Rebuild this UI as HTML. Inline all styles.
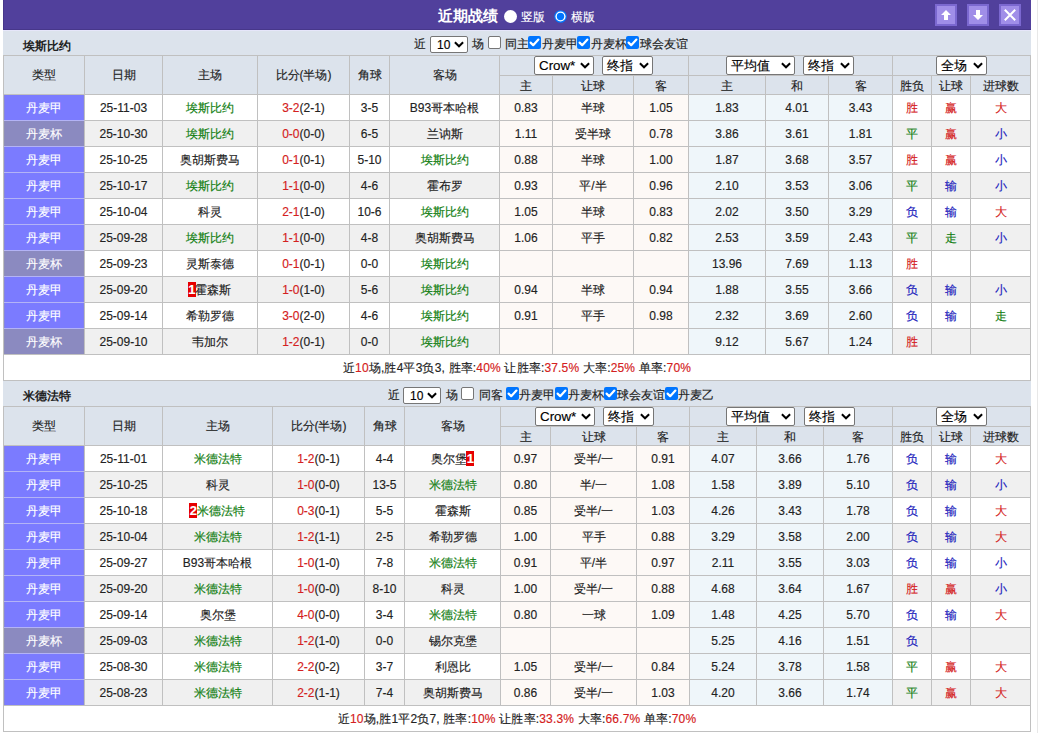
<!DOCTYPE html><html><head><meta charset="utf-8"><style>
html,body{margin:0;padding:0;background:#fff;width:1038px;height:733px;overflow:hidden}
body{position:relative;font-family:"Liberation Sans",sans-serif;font-size:12px;color:#222;-webkit-text-stroke:0.15px currentColor}
body>div{position:absolute}
.t{text-align:center;white-space:nowrap}
.tl{text-align:left;white-space:nowrap}
.c{text-align:center}
.b{font-weight:bold;-webkit-text-stroke:0}
.bd{display:inline-block;background:#e60000;color:#fff;font-weight:bold;width:8px;height:15px;line-height:15px;text-align:center;font-size:13px;vertical-align:middle;margin-top:-2px;margin-left:-1px;margin-right:-0.5px;letter-spacing:0}
.cb{width:11px;height:11px;border:1px solid #767676;border-radius:2px;background:#fff}
.cb.on{width:13px;height:13px;border:none;background:#0075ff}
.cb svg{display:block}
.sel{position:absolute;border:1px solid #767676;border-radius:2px;background:#fff;font-size:13.33px;color:#000}

</style></head><body>
<div style="left:3px;top:0;width:1028px;height:30px;background:#51409c;box-shadow:inset 1px -1px 0 #47378a"></div>
<div style="left:3px;top:30px;width:1028px;height:1px;background:#e6e6fa"></div>
<div style="left:1037px;top:0;width:1px;height:733px;background:#e8e8e8"></div>
<div class="tl" style="left:438px;top:5px;color:#fff;font-weight:bold;font-size:15px;line-height:22px;-webkit-text-stroke:0">近期战绩</div>
<div style="left:504px;top:10px;width:13px;height:13px;border-radius:50%;background:#fff"></div>
<div class="tl" style="left:521px;top:6px;color:#fff;line-height:22px">竖版</div>
<div style="left:554px;top:10px"><svg width="13" height="13" viewBox="0 0 13 13"><circle cx="6.5" cy="6.5" r="6.3" fill="#0075ff"/><circle cx="6.5" cy="6.5" r="5.1" fill="#fff"/><circle cx="6.5" cy="6.5" r="3.7" fill="#0075ff"/></svg></div>
<div class="tl" style="left:571px;top:6px;color:#fff;line-height:22px">横版</div>
<div style="left:935px;top:4px;width:18px;height:18px;border:2px solid #7b68d0;background:#a08ee8"></div>
<div style="left:967px;top:4px;width:18px;height:18px;border:2px solid #7b68d0;background:#a08ee8"></div>
<div style="left:999px;top:4px;width:18px;height:18px;border:2px solid #7b68d0;background:#a08ee8"></div>
<div style="left:935px;top:4px"><svg width="22" height="22" viewBox="0 0 22 22"><path d="M11 6 L16 11 L13 11 L13 16 L9 16 L9 11 L6 11 Z" fill="#fff"/></svg></div>
<div style="left:967px;top:4px"><svg width="22" height="22" viewBox="0 0 22 22"><path d="M11 16 L16 11 L13 11 L13 6 L9 6 L9 11 L6 11 Z" fill="#fff"/></svg></div>
<div style="left:999px;top:4px"><svg width="22" height="22" viewBox="0 0 22 22"><path d="M5.8 5.8 L16.2 16.2 M16.2 5.8 L5.8 16.2" stroke="#fff" stroke-width="2"/></svg></div>
<div style="left:3px;top:31px;width:1028px;height:24px;background:#dce3ec;"></div>
<div class="tl b" style="left:23px;top:31px;height:24px;line-height:24px;padding-top:3px">埃斯比约</div>
<div class="tl" style="left:414px;top:36px;line-height:17px">近</div><div class="sel" style="left:430px;top:36px;width:36px;height:15px"><span style="position:absolute;left:6px;top:1px;line-height:15px;font-size:12px;font-family:"Liberation Mono",monospace;letter-spacing:-1.4px">10</span><svg style="position:absolute;right:3px;top:4px" width="10" height="7" viewBox="0 0 10 7"><path d="M0.9 1.3 L5 5.3 L9.1 1.3" stroke="#000" stroke-width="2" fill="none"/></svg></div><div class="tl" style="left:472px;top:36px;line-height:17px">场</div><div class="cb" style="left:488px;top:36px"></div><div class="tl" style="left:505px;top:36px;line-height:17px">同主</div><div class="cb on" style="left:528px;top:36px"><svg width="13" height="13" viewBox="0 0 13 13"><path d="M2.6 6.6 L5.2 9.2 L10.4 3.6" stroke="#fff" stroke-width="2.2" fill="none" stroke-linecap="round" stroke-linejoin="round"/></svg></div><div class="tl" style="left:542px;top:36px;line-height:17px">丹麦甲</div><div class="cb on" style="left:577px;top:36px"><svg width="13" height="13" viewBox="0 0 13 13"><path d="M2.6 6.6 L5.2 9.2 L10.4 3.6" stroke="#fff" stroke-width="2.2" fill="none" stroke-linecap="round" stroke-linejoin="round"/></svg></div><div class="tl" style="left:591px;top:36px;line-height:17px">丹麦杯</div><div class="cb on" style="left:626px;top:36px"><svg width="13" height="13" viewBox="0 0 13 13"><path d="M2.6 6.6 L5.2 9.2 L10.4 3.6" stroke="#fff" stroke-width="2.2" fill="none" stroke-linecap="round" stroke-linejoin="round"/></svg></div><div class="tl" style="left:640px;top:36px;line-height:17px">球会友谊</div>
<div style="left:3px;top:55px;width:1028px;height:39px;background:#dce3ec;"></div>
<div style="left:3px;top:94px;width:1028px;height:26px;background:#fff;"></div>
<div style="left:4px;top:95px;width:80px;height:25px;background:#7b7bff;box-shadow:inset 1px 0 0 rgba(150,150,170,0.35),inset -1px 0 0 rgba(150,150,170,0.2)"></div>
<div style="left:500px;top:95px;width:188px;height:25px;background:#fdf9f6;"></div>
<div style="left:689px;top:95px;width:203px;height:25px;background:#eff6fa;"></div>
<div style="left:3px;top:120px;width:1028px;height:26px;background:#f0f0f0;"></div>
<div style="left:4px;top:121px;width:80px;height:25px;background:#8b8ac0;box-shadow:inset 1px 0 0 rgba(150,150,170,0.35),inset -1px 0 0 rgba(150,150,170,0.2)"></div>
<div style="left:500px;top:121px;width:188px;height:25px;background:#fdf9f6;"></div>
<div style="left:689px;top:121px;width:203px;height:25px;background:#eff6fa;"></div>
<div style="left:3px;top:146px;width:1028px;height:26px;background:#fff;"></div>
<div style="left:4px;top:147px;width:80px;height:25px;background:#7b7bff;box-shadow:inset 1px 0 0 rgba(150,150,170,0.35),inset -1px 0 0 rgba(150,150,170,0.2)"></div>
<div style="left:500px;top:147px;width:188px;height:25px;background:#fdf9f6;"></div>
<div style="left:689px;top:147px;width:203px;height:25px;background:#eff6fa;"></div>
<div style="left:3px;top:172px;width:1028px;height:26px;background:#f0f0f0;"></div>
<div style="left:4px;top:173px;width:80px;height:25px;background:#7b7bff;box-shadow:inset 1px 0 0 rgba(150,150,170,0.35),inset -1px 0 0 rgba(150,150,170,0.2)"></div>
<div style="left:500px;top:173px;width:188px;height:25px;background:#fdf9f6;"></div>
<div style="left:689px;top:173px;width:203px;height:25px;background:#eff6fa;"></div>
<div style="left:3px;top:198px;width:1028px;height:26px;background:#fff;"></div>
<div style="left:4px;top:199px;width:80px;height:25px;background:#7b7bff;box-shadow:inset 1px 0 0 rgba(150,150,170,0.35),inset -1px 0 0 rgba(150,150,170,0.2)"></div>
<div style="left:500px;top:199px;width:188px;height:25px;background:#fdf9f6;"></div>
<div style="left:689px;top:199px;width:203px;height:25px;background:#eff6fa;"></div>
<div style="left:3px;top:224px;width:1028px;height:26px;background:#f0f0f0;"></div>
<div style="left:4px;top:225px;width:80px;height:25px;background:#7b7bff;box-shadow:inset 1px 0 0 rgba(150,150,170,0.35),inset -1px 0 0 rgba(150,150,170,0.2)"></div>
<div style="left:500px;top:225px;width:188px;height:25px;background:#fdf9f6;"></div>
<div style="left:689px;top:225px;width:203px;height:25px;background:#eff6fa;"></div>
<div style="left:3px;top:250px;width:1028px;height:26px;background:#fff;"></div>
<div style="left:4px;top:251px;width:80px;height:25px;background:#8b8ac0;box-shadow:inset 1px 0 0 rgba(150,150,170,0.35),inset -1px 0 0 rgba(150,150,170,0.2)"></div>
<div style="left:500px;top:251px;width:188px;height:25px;background:#fdf9f6;"></div>
<div style="left:689px;top:251px;width:203px;height:25px;background:#eff6fa;"></div>
<div style="left:3px;top:276px;width:1028px;height:26px;background:#f0f0f0;"></div>
<div style="left:4px;top:277px;width:80px;height:25px;background:#7b7bff;box-shadow:inset 1px 0 0 rgba(150,150,170,0.35),inset -1px 0 0 rgba(150,150,170,0.2)"></div>
<div style="left:500px;top:277px;width:188px;height:25px;background:#fdf9f6;"></div>
<div style="left:689px;top:277px;width:203px;height:25px;background:#eff6fa;"></div>
<div style="left:3px;top:302px;width:1028px;height:26px;background:#fff;"></div>
<div style="left:4px;top:303px;width:80px;height:25px;background:#7b7bff;box-shadow:inset 1px 0 0 rgba(150,150,170,0.35),inset -1px 0 0 rgba(150,150,170,0.2)"></div>
<div style="left:500px;top:303px;width:188px;height:25px;background:#fdf9f6;"></div>
<div style="left:689px;top:303px;width:203px;height:25px;background:#eff6fa;"></div>
<div style="left:3px;top:328px;width:1028px;height:26px;background:#f0f0f0;"></div>
<div style="left:4px;top:329px;width:80px;height:25px;background:#8b8ac0;box-shadow:inset 1px 0 0 rgba(150,150,170,0.35),inset -1px 0 0 rgba(150,150,170,0.2)"></div>
<div style="left:500px;top:329px;width:188px;height:25px;background:#fdf9f6;"></div>
<div style="left:689px;top:329px;width:203px;height:25px;background:#eff6fa;"></div>
<div style="left:3px;top:354px;width:1028px;height:26px;background:#fff;"></div>
<div style="left:3px;top:55px;width:1028px;height:1px;background:#c0c0c0;"></div>
<div style="left:499px;top:75px;width:532px;height:1px;background:#c0c0c0;"></div>
<div style="left:3px;top:94px;width:1028px;height:1px;background:#c0c0c0;"></div>
<div style="left:3px;top:120px;width:1028px;height:1px;background:#c0c0c0;"></div>
<div style="left:4px;top:120px;width:80px;height:1px;background:#b3b3f6;"></div>
<div style="left:3px;top:146px;width:1028px;height:1px;background:#c0c0c0;"></div>
<div style="left:4px;top:146px;width:80px;height:1px;background:#b3b3f6;"></div>
<div style="left:3px;top:172px;width:1028px;height:1px;background:#c0c0c0;"></div>
<div style="left:4px;top:172px;width:80px;height:1px;background:#b3b3f6;"></div>
<div style="left:3px;top:198px;width:1028px;height:1px;background:#c0c0c0;"></div>
<div style="left:4px;top:198px;width:80px;height:1px;background:#b3b3f6;"></div>
<div style="left:3px;top:224px;width:1028px;height:1px;background:#c0c0c0;"></div>
<div style="left:4px;top:224px;width:80px;height:1px;background:#b3b3f6;"></div>
<div style="left:3px;top:250px;width:1028px;height:1px;background:#c0c0c0;"></div>
<div style="left:4px;top:250px;width:80px;height:1px;background:#b3b3f6;"></div>
<div style="left:3px;top:276px;width:1028px;height:1px;background:#c0c0c0;"></div>
<div style="left:4px;top:276px;width:80px;height:1px;background:#b3b3f6;"></div>
<div style="left:3px;top:302px;width:1028px;height:1px;background:#c0c0c0;"></div>
<div style="left:4px;top:302px;width:80px;height:1px;background:#b3b3f6;"></div>
<div style="left:3px;top:328px;width:1028px;height:1px;background:#c0c0c0;"></div>
<div style="left:4px;top:328px;width:80px;height:1px;background:#b3b3f6;"></div>
<div style="left:3px;top:354px;width:1028px;height:1px;background:#c0c0c0;"></div>
<div style="left:3px;top:380px;width:1028px;height:1px;background:#c0c0c0;"></div>
<div style="left:3px;top:55px;width:1px;height:326px;background:#c0c0c0;"></div>
<div style="left:84px;top:55px;width:1px;height:300px;background:#c0c0c0;"></div>
<div style="left:162px;top:55px;width:1px;height:300px;background:#c0c0c0;"></div>
<div style="left:257px;top:55px;width:1px;height:300px;background:#c0c0c0;"></div>
<div style="left:349px;top:55px;width:1px;height:300px;background:#c0c0c0;"></div>
<div style="left:389px;top:55px;width:1px;height:300px;background:#c0c0c0;"></div>
<div style="left:499px;top:55px;width:1px;height:300px;background:#c0c0c0;"></div>
<div style="left:552px;top:75px;width:1px;height:280px;background:#c0c0c0;"></div>
<div style="left:633px;top:75px;width:1px;height:280px;background:#c0c0c0;"></div>
<div style="left:688px;top:55px;width:1px;height:300px;background:#c0c0c0;"></div>
<div style="left:765px;top:75px;width:1px;height:280px;background:#c0c0c0;"></div>
<div style="left:828px;top:75px;width:1px;height:280px;background:#c0c0c0;"></div>
<div style="left:892px;top:55px;width:1px;height:300px;background:#c0c0c0;"></div>
<div style="left:931px;top:75px;width:1px;height:280px;background:#c0c0c0;"></div>
<div style="left:970px;top:75px;width:1px;height:280px;background:#c0c0c0;"></div>
<div style="left:1030px;top:55px;width:1px;height:326px;background:#c0c0c0;"></div>
<div class="t" style="left:4px;top:56px;width:80px;height:39px;line-height:39px;">类型</div>
<div class="t" style="left:85px;top:56px;width:77px;height:39px;line-height:39px;">日期</div>
<div class="t" style="left:163px;top:56px;width:94px;height:39px;line-height:39px;">主场</div>
<div class="t" style="left:258px;top:56px;width:91px;height:39px;line-height:39px;">比分(半场)</div>
<div class="t" style="left:350px;top:56px;width:39px;height:39px;line-height:39px;">角球</div>
<div class="t" style="left:390px;top:56px;width:109px;height:39px;line-height:39px;">客场</div>
<div class="t" style="left:500px;top:77px;width:52px;height:18px;line-height:18px;">主</div>
<div class="t" style="left:553px;top:77px;width:80px;height:18px;line-height:18px;">让球</div>
<div class="t" style="left:634px;top:77px;width:54px;height:18px;line-height:18px;">客</div>
<div class="t" style="left:689px;top:77px;width:76px;height:18px;line-height:18px;">主</div>
<div class="t" style="left:766px;top:77px;width:62px;height:18px;line-height:18px;">和</div>
<div class="t" style="left:829px;top:77px;width:63px;height:18px;line-height:18px;">客</div>
<div class="t" style="left:893px;top:77px;width:38px;height:18px;line-height:18px;">胜负</div>
<div class="t" style="left:932px;top:77px;width:38px;height:18px;line-height:18px;">让球</div>
<div class="t" style="left:971px;top:77px;width:59px;height:18px;line-height:18px;">进球数</div>
<div class="t" style="left:4px;top:96px;width:80px;height:25px;line-height:25px;color:#fff">丹麦甲</div>
<div class="t" style="left:85px;top:96px;width:77px;height:25px;line-height:25px;">25-11-03</div>
<div class="t" style="left:163px;top:96px;width:94px;height:25px;line-height:25px;"><span style="color:#0f7d0f">埃斯比约</span></div>
<div class="t" style="left:258px;top:96px;width:91px;height:25px;line-height:25px;"><span style="color:#d42020">3-2</span>(2-1)</div>
<div class="t" style="left:350px;top:96px;width:39px;height:25px;line-height:25px;">3-5</div>
<div class="t" style="left:390px;top:96px;width:109px;height:25px;line-height:25px;">B93哥本哈根</div>
<div class="t" style="left:500px;top:96px;width:52px;height:25px;line-height:25px;">0.83</div>
<div class="t" style="left:553px;top:96px;width:80px;height:25px;line-height:25px;">半球</div>
<div class="t" style="left:634px;top:96px;width:54px;height:25px;line-height:25px;">1.05</div>
<div class="t" style="left:689px;top:96px;width:76px;height:25px;line-height:25px;">1.83</div>
<div class="t" style="left:766px;top:96px;width:62px;height:25px;line-height:25px;">4.01</div>
<div class="t" style="left:829px;top:96px;width:63px;height:25px;line-height:25px;">3.43</div>
<div class="t" style="left:893px;top:96px;width:38px;height:25px;line-height:25px;"><span style="color:#d42020">胜</span></div>
<div class="t" style="left:932px;top:96px;width:38px;height:25px;line-height:25px;"><span style="color:#d42020">赢</span></div>
<div class="t" style="left:971px;top:96px;width:59px;height:25px;line-height:25px;"><span style="color:#d42020">大</span></div>
<div class="t" style="left:4px;top:122px;width:80px;height:25px;line-height:25px;color:#fff">丹麦杯</div>
<div class="t" style="left:85px;top:122px;width:77px;height:25px;line-height:25px;">25-10-30</div>
<div class="t" style="left:163px;top:122px;width:94px;height:25px;line-height:25px;"><span style="color:#0f7d0f">埃斯比约</span></div>
<div class="t" style="left:258px;top:122px;width:91px;height:25px;line-height:25px;"><span style="color:#d42020">0-0</span>(0-0)</div>
<div class="t" style="left:350px;top:122px;width:39px;height:25px;line-height:25px;">6-5</div>
<div class="t" style="left:390px;top:122px;width:109px;height:25px;line-height:25px;">兰讷斯</div>
<div class="t" style="left:500px;top:122px;width:52px;height:25px;line-height:25px;">1.11</div>
<div class="t" style="left:553px;top:122px;width:80px;height:25px;line-height:25px;">受半球</div>
<div class="t" style="left:634px;top:122px;width:54px;height:25px;line-height:25px;">0.78</div>
<div class="t" style="left:689px;top:122px;width:76px;height:25px;line-height:25px;">3.86</div>
<div class="t" style="left:766px;top:122px;width:62px;height:25px;line-height:25px;">3.61</div>
<div class="t" style="left:829px;top:122px;width:63px;height:25px;line-height:25px;">1.81</div>
<div class="t" style="left:893px;top:122px;width:38px;height:25px;line-height:25px;"><span style="color:#0f7d0f">平</span></div>
<div class="t" style="left:932px;top:122px;width:38px;height:25px;line-height:25px;"><span style="color:#d42020">赢</span></div>
<div class="t" style="left:971px;top:122px;width:59px;height:25px;line-height:25px;"><span style="color:#1818bb">小</span></div>
<div class="t" style="left:4px;top:148px;width:80px;height:25px;line-height:25px;color:#fff">丹麦甲</div>
<div class="t" style="left:85px;top:148px;width:77px;height:25px;line-height:25px;">25-10-25</div>
<div class="t" style="left:163px;top:148px;width:94px;height:25px;line-height:25px;">奥胡斯费马</div>
<div class="t" style="left:258px;top:148px;width:91px;height:25px;line-height:25px;"><span style="color:#d42020">0-1</span>(0-1)</div>
<div class="t" style="left:350px;top:148px;width:39px;height:25px;line-height:25px;">5-10</div>
<div class="t" style="left:390px;top:148px;width:109px;height:25px;line-height:25px;"><span style="color:#0f7d0f">埃斯比约</span></div>
<div class="t" style="left:500px;top:148px;width:52px;height:25px;line-height:25px;">0.88</div>
<div class="t" style="left:553px;top:148px;width:80px;height:25px;line-height:25px;">半球</div>
<div class="t" style="left:634px;top:148px;width:54px;height:25px;line-height:25px;">1.00</div>
<div class="t" style="left:689px;top:148px;width:76px;height:25px;line-height:25px;">1.87</div>
<div class="t" style="left:766px;top:148px;width:62px;height:25px;line-height:25px;">3.68</div>
<div class="t" style="left:829px;top:148px;width:63px;height:25px;line-height:25px;">3.57</div>
<div class="t" style="left:893px;top:148px;width:38px;height:25px;line-height:25px;"><span style="color:#d42020">胜</span></div>
<div class="t" style="left:932px;top:148px;width:38px;height:25px;line-height:25px;"><span style="color:#d42020">赢</span></div>
<div class="t" style="left:971px;top:148px;width:59px;height:25px;line-height:25px;"><span style="color:#1818bb">小</span></div>
<div class="t" style="left:4px;top:174px;width:80px;height:25px;line-height:25px;color:#fff">丹麦甲</div>
<div class="t" style="left:85px;top:174px;width:77px;height:25px;line-height:25px;">25-10-17</div>
<div class="t" style="left:163px;top:174px;width:94px;height:25px;line-height:25px;"><span style="color:#0f7d0f">埃斯比约</span></div>
<div class="t" style="left:258px;top:174px;width:91px;height:25px;line-height:25px;"><span style="color:#d42020">1-1</span>(0-0)</div>
<div class="t" style="left:350px;top:174px;width:39px;height:25px;line-height:25px;">4-6</div>
<div class="t" style="left:390px;top:174px;width:109px;height:25px;line-height:25px;">霍布罗</div>
<div class="t" style="left:500px;top:174px;width:52px;height:25px;line-height:25px;">0.93</div>
<div class="t" style="left:553px;top:174px;width:80px;height:25px;line-height:25px;">平/半</div>
<div class="t" style="left:634px;top:174px;width:54px;height:25px;line-height:25px;">0.96</div>
<div class="t" style="left:689px;top:174px;width:76px;height:25px;line-height:25px;">2.10</div>
<div class="t" style="left:766px;top:174px;width:62px;height:25px;line-height:25px;">3.53</div>
<div class="t" style="left:829px;top:174px;width:63px;height:25px;line-height:25px;">3.06</div>
<div class="t" style="left:893px;top:174px;width:38px;height:25px;line-height:25px;"><span style="color:#0f7d0f">平</span></div>
<div class="t" style="left:932px;top:174px;width:38px;height:25px;line-height:25px;"><span style="color:#1818bb">输</span></div>
<div class="t" style="left:971px;top:174px;width:59px;height:25px;line-height:25px;"><span style="color:#1818bb">小</span></div>
<div class="t" style="left:4px;top:200px;width:80px;height:25px;line-height:25px;color:#fff">丹麦甲</div>
<div class="t" style="left:85px;top:200px;width:77px;height:25px;line-height:25px;">25-10-04</div>
<div class="t" style="left:163px;top:200px;width:94px;height:25px;line-height:25px;">科灵</div>
<div class="t" style="left:258px;top:200px;width:91px;height:25px;line-height:25px;"><span style="color:#d42020">2-1</span>(1-0)</div>
<div class="t" style="left:350px;top:200px;width:39px;height:25px;line-height:25px;">10-6</div>
<div class="t" style="left:390px;top:200px;width:109px;height:25px;line-height:25px;"><span style="color:#0f7d0f">埃斯比约</span></div>
<div class="t" style="left:500px;top:200px;width:52px;height:25px;line-height:25px;">1.05</div>
<div class="t" style="left:553px;top:200px;width:80px;height:25px;line-height:25px;">半球</div>
<div class="t" style="left:634px;top:200px;width:54px;height:25px;line-height:25px;">0.83</div>
<div class="t" style="left:689px;top:200px;width:76px;height:25px;line-height:25px;">2.02</div>
<div class="t" style="left:766px;top:200px;width:62px;height:25px;line-height:25px;">3.50</div>
<div class="t" style="left:829px;top:200px;width:63px;height:25px;line-height:25px;">3.29</div>
<div class="t" style="left:893px;top:200px;width:38px;height:25px;line-height:25px;"><span style="color:#1818bb">负</span></div>
<div class="t" style="left:932px;top:200px;width:38px;height:25px;line-height:25px;"><span style="color:#1818bb">输</span></div>
<div class="t" style="left:971px;top:200px;width:59px;height:25px;line-height:25px;"><span style="color:#d42020">大</span></div>
<div class="t" style="left:4px;top:226px;width:80px;height:25px;line-height:25px;color:#fff">丹麦甲</div>
<div class="t" style="left:85px;top:226px;width:77px;height:25px;line-height:25px;">25-09-28</div>
<div class="t" style="left:163px;top:226px;width:94px;height:25px;line-height:25px;"><span style="color:#0f7d0f">埃斯比约</span></div>
<div class="t" style="left:258px;top:226px;width:91px;height:25px;line-height:25px;"><span style="color:#d42020">1-1</span>(0-0)</div>
<div class="t" style="left:350px;top:226px;width:39px;height:25px;line-height:25px;">4-8</div>
<div class="t" style="left:390px;top:226px;width:109px;height:25px;line-height:25px;">奥胡斯费马</div>
<div class="t" style="left:500px;top:226px;width:52px;height:25px;line-height:25px;">1.06</div>
<div class="t" style="left:553px;top:226px;width:80px;height:25px;line-height:25px;">平手</div>
<div class="t" style="left:634px;top:226px;width:54px;height:25px;line-height:25px;">0.82</div>
<div class="t" style="left:689px;top:226px;width:76px;height:25px;line-height:25px;">2.53</div>
<div class="t" style="left:766px;top:226px;width:62px;height:25px;line-height:25px;">3.59</div>
<div class="t" style="left:829px;top:226px;width:63px;height:25px;line-height:25px;">2.43</div>
<div class="t" style="left:893px;top:226px;width:38px;height:25px;line-height:25px;"><span style="color:#0f7d0f">平</span></div>
<div class="t" style="left:932px;top:226px;width:38px;height:25px;line-height:25px;"><span style="color:#0f7d0f">走</span></div>
<div class="t" style="left:971px;top:226px;width:59px;height:25px;line-height:25px;"><span style="color:#1818bb">小</span></div>
<div class="t" style="left:4px;top:252px;width:80px;height:25px;line-height:25px;color:#fff">丹麦杯</div>
<div class="t" style="left:85px;top:252px;width:77px;height:25px;line-height:25px;">25-09-23</div>
<div class="t" style="left:163px;top:252px;width:94px;height:25px;line-height:25px;">灵斯泰德</div>
<div class="t" style="left:258px;top:252px;width:91px;height:25px;line-height:25px;"><span style="color:#d42020">0-1</span>(0-1)</div>
<div class="t" style="left:350px;top:252px;width:39px;height:25px;line-height:25px;">0-0</div>
<div class="t" style="left:390px;top:252px;width:109px;height:25px;line-height:25px;"><span style="color:#0f7d0f">埃斯比约</span></div>
<div class="t" style="left:689px;top:252px;width:76px;height:25px;line-height:25px;">13.96</div>
<div class="t" style="left:766px;top:252px;width:62px;height:25px;line-height:25px;">7.69</div>
<div class="t" style="left:829px;top:252px;width:63px;height:25px;line-height:25px;">1.13</div>
<div class="t" style="left:893px;top:252px;width:38px;height:25px;line-height:25px;"><span style="color:#d42020">胜</span></div>
<div class="t" style="left:4px;top:278px;width:80px;height:25px;line-height:25px;color:#fff">丹麦甲</div>
<div class="t" style="left:85px;top:278px;width:77px;height:25px;line-height:25px;">25-09-20</div>
<div class="t" style="left:163px;top:278px;width:94px;height:25px;line-height:25px;"><span class="bd">1</span>霍森斯</div>
<div class="t" style="left:258px;top:278px;width:91px;height:25px;line-height:25px;"><span style="color:#d42020">1-0</span>(1-0)</div>
<div class="t" style="left:350px;top:278px;width:39px;height:25px;line-height:25px;">5-6</div>
<div class="t" style="left:390px;top:278px;width:109px;height:25px;line-height:25px;"><span style="color:#0f7d0f">埃斯比约</span></div>
<div class="t" style="left:500px;top:278px;width:52px;height:25px;line-height:25px;">0.94</div>
<div class="t" style="left:553px;top:278px;width:80px;height:25px;line-height:25px;">半球</div>
<div class="t" style="left:634px;top:278px;width:54px;height:25px;line-height:25px;">0.94</div>
<div class="t" style="left:689px;top:278px;width:76px;height:25px;line-height:25px;">1.88</div>
<div class="t" style="left:766px;top:278px;width:62px;height:25px;line-height:25px;">3.55</div>
<div class="t" style="left:829px;top:278px;width:63px;height:25px;line-height:25px;">3.66</div>
<div class="t" style="left:893px;top:278px;width:38px;height:25px;line-height:25px;"><span style="color:#1818bb">负</span></div>
<div class="t" style="left:932px;top:278px;width:38px;height:25px;line-height:25px;"><span style="color:#1818bb">输</span></div>
<div class="t" style="left:971px;top:278px;width:59px;height:25px;line-height:25px;"><span style="color:#1818bb">小</span></div>
<div class="t" style="left:4px;top:304px;width:80px;height:25px;line-height:25px;color:#fff">丹麦甲</div>
<div class="t" style="left:85px;top:304px;width:77px;height:25px;line-height:25px;">25-09-14</div>
<div class="t" style="left:163px;top:304px;width:94px;height:25px;line-height:25px;">希勒罗德</div>
<div class="t" style="left:258px;top:304px;width:91px;height:25px;line-height:25px;"><span style="color:#d42020">3-0</span>(2-0)</div>
<div class="t" style="left:350px;top:304px;width:39px;height:25px;line-height:25px;">4-6</div>
<div class="t" style="left:390px;top:304px;width:109px;height:25px;line-height:25px;"><span style="color:#0f7d0f">埃斯比约</span></div>
<div class="t" style="left:500px;top:304px;width:52px;height:25px;line-height:25px;">0.91</div>
<div class="t" style="left:553px;top:304px;width:80px;height:25px;line-height:25px;">平手</div>
<div class="t" style="left:634px;top:304px;width:54px;height:25px;line-height:25px;">0.98</div>
<div class="t" style="left:689px;top:304px;width:76px;height:25px;line-height:25px;">2.32</div>
<div class="t" style="left:766px;top:304px;width:62px;height:25px;line-height:25px;">3.69</div>
<div class="t" style="left:829px;top:304px;width:63px;height:25px;line-height:25px;">2.60</div>
<div class="t" style="left:893px;top:304px;width:38px;height:25px;line-height:25px;"><span style="color:#1818bb">负</span></div>
<div class="t" style="left:932px;top:304px;width:38px;height:25px;line-height:25px;"><span style="color:#1818bb">输</span></div>
<div class="t" style="left:971px;top:304px;width:59px;height:25px;line-height:25px;"><span style="color:#0f7d0f">走</span></div>
<div class="t" style="left:4px;top:330px;width:80px;height:25px;line-height:25px;color:#fff">丹麦杯</div>
<div class="t" style="left:85px;top:330px;width:77px;height:25px;line-height:25px;">25-09-10</div>
<div class="t" style="left:163px;top:330px;width:94px;height:25px;line-height:25px;">韦加尔</div>
<div class="t" style="left:258px;top:330px;width:91px;height:25px;line-height:25px;"><span style="color:#d42020">1-2</span>(0-1)</div>
<div class="t" style="left:350px;top:330px;width:39px;height:25px;line-height:25px;">0-0</div>
<div class="t" style="left:390px;top:330px;width:109px;height:25px;line-height:25px;"><span style="color:#0f7d0f">埃斯比约</span></div>
<div class="t" style="left:689px;top:330px;width:76px;height:25px;line-height:25px;">9.12</div>
<div class="t" style="left:766px;top:330px;width:62px;height:25px;line-height:25px;">5.67</div>
<div class="t" style="left:829px;top:330px;width:63px;height:25px;line-height:25px;">1.24</div>
<div class="t" style="left:893px;top:330px;width:38px;height:25px;line-height:25px;"><span style="color:#d42020">胜</span></div>
<div class="t" style="left:4px;top:356px;width:1026px;height:25px;line-height:25px;letter-spacing:0.17px">近<span style="color:#d42020">10</span>场,胜4平3负3, 胜率:<span style="color:#d42020">40%</span> 让胜率:<span style="color:#d42020">37.5%</span> 大率:<span style="color:#d42020">25%</span> 单率:<span style="color:#d42020">70%</span></div>
<div class="sel" style="left:534px;top:56px;width:58px;height:17px"><span style="position:absolute;left:4px;top:0px;line-height:17px;font-size:13.33px;">Crow*</span><svg style="position:absolute;right:3px;top:5px" width="10" height="7" viewBox="0 0 10 7"><path d="M0.9 1.3 L5 5.3 L9.1 1.3" stroke="#000" stroke-width="2" fill="none"/></svg></div><div class="sel" style="left:602px;top:56px;width:49px;height:17px"><span style="position:absolute;left:4px;top:0px;line-height:17px;font-size:13.33px;">终指</span><svg style="position:absolute;right:3px;top:5px" width="10" height="7" viewBox="0 0 10 7"><path d="M0.9 1.3 L5 5.3 L9.1 1.3" stroke="#000" stroke-width="2" fill="none"/></svg></div><div class="sel" style="left:726px;top:56px;width:67px;height:17px"><span style="position:absolute;left:4px;top:0px;line-height:17px;font-size:13.33px;">平均值</span><svg style="position:absolute;right:3px;top:5px" width="10" height="7" viewBox="0 0 10 7"><path d="M0.9 1.3 L5 5.3 L9.1 1.3" stroke="#000" stroke-width="2" fill="none"/></svg></div><div class="sel" style="left:803px;top:56px;width:49px;height:17px"><span style="position:absolute;left:4px;top:0px;line-height:17px;font-size:13.33px;">终指</span><svg style="position:absolute;right:3px;top:5px" width="10" height="7" viewBox="0 0 10 7"><path d="M0.9 1.3 L5 5.3 L9.1 1.3" stroke="#000" stroke-width="2" fill="none"/></svg></div><div class="sel" style="left:936px;top:56px;width:49px;height:17px"><span style="position:absolute;left:4px;top:0px;line-height:17px;font-size:13.33px;">全场</span><svg style="position:absolute;right:3px;top:5px" width="10" height="7" viewBox="0 0 10 7"><path d="M0.9 1.3 L5 5.3 L9.1 1.3" stroke="#000" stroke-width="2" fill="none"/></svg></div>
<div style="left:3px;top:381px;width:1028px;height:25px;background:#dce3ec;"></div>
<div class="tl b" style="left:23px;top:381px;height:25px;line-height:25px;padding-top:3px">米德法特</div>
<div class="tl" style="left:388px;top:387px;line-height:17px">近</div><div class="sel" style="left:403px;top:387px;width:36px;height:15px"><span style="position:absolute;left:6px;top:1px;line-height:15px;font-size:12px;font-family:"Liberation Mono",monospace;letter-spacing:-1.4px">10</span><svg style="position:absolute;right:3px;top:4px" width="10" height="7" viewBox="0 0 10 7"><path d="M0.9 1.3 L5 5.3 L9.1 1.3" stroke="#000" stroke-width="2" fill="none"/></svg></div><div class="tl" style="left:446px;top:387px;line-height:17px">场</div><div class="cb" style="left:461px;top:387px"></div><div class="tl" style="left:479px;top:387px;line-height:17px">同客</div><div class="cb on" style="left:506px;top:387px"><svg width="13" height="13" viewBox="0 0 13 13"><path d="M2.6 6.6 L5.2 9.2 L10.4 3.6" stroke="#fff" stroke-width="2.2" fill="none" stroke-linecap="round" stroke-linejoin="round"/></svg></div><div class="tl" style="left:519px;top:387px;line-height:17px">丹麦甲</div><div class="cb on" style="left:555px;top:387px"><svg width="13" height="13" viewBox="0 0 13 13"><path d="M2.6 6.6 L5.2 9.2 L10.4 3.6" stroke="#fff" stroke-width="2.2" fill="none" stroke-linecap="round" stroke-linejoin="round"/></svg></div><div class="tl" style="left:568px;top:387px;line-height:17px">丹麦杯</div><div class="cb on" style="left:604px;top:387px"><svg width="13" height="13" viewBox="0 0 13 13"><path d="M2.6 6.6 L5.2 9.2 L10.4 3.6" stroke="#fff" stroke-width="2.2" fill="none" stroke-linecap="round" stroke-linejoin="round"/></svg></div><div class="tl" style="left:617px;top:387px;line-height:17px">球会友谊</div><div class="cb on" style="left:665px;top:387px"><svg width="13" height="13" viewBox="0 0 13 13"><path d="M2.6 6.6 L5.2 9.2 L10.4 3.6" stroke="#fff" stroke-width="2.2" fill="none" stroke-linecap="round" stroke-linejoin="round"/></svg></div><div class="tl" style="left:678px;top:387px;line-height:17px">丹麦乙</div>
<div style="left:3px;top:406px;width:1028px;height:39px;background:#dce3ec;"></div>
<div style="left:3px;top:445px;width:1028px;height:26px;background:#fff;"></div>
<div style="left:4px;top:446px;width:80px;height:25px;background:#7b7bff;box-shadow:inset 1px 0 0 rgba(150,150,170,0.35),inset -1px 0 0 rgba(150,150,170,0.2)"></div>
<div style="left:501px;top:446px;width:188px;height:25px;background:#fdf9f6;"></div>
<div style="left:690px;top:446px;width:202px;height:25px;background:#eff6fa;"></div>
<div style="left:3px;top:471px;width:1028px;height:26px;background:#f0f0f0;"></div>
<div style="left:4px;top:472px;width:80px;height:25px;background:#7b7bff;box-shadow:inset 1px 0 0 rgba(150,150,170,0.35),inset -1px 0 0 rgba(150,150,170,0.2)"></div>
<div style="left:501px;top:472px;width:188px;height:25px;background:#fdf9f6;"></div>
<div style="left:690px;top:472px;width:202px;height:25px;background:#eff6fa;"></div>
<div style="left:3px;top:497px;width:1028px;height:26px;background:#fff;"></div>
<div style="left:4px;top:498px;width:80px;height:25px;background:#7b7bff;box-shadow:inset 1px 0 0 rgba(150,150,170,0.35),inset -1px 0 0 rgba(150,150,170,0.2)"></div>
<div style="left:501px;top:498px;width:188px;height:25px;background:#fdf9f6;"></div>
<div style="left:690px;top:498px;width:202px;height:25px;background:#eff6fa;"></div>
<div style="left:3px;top:523px;width:1028px;height:26px;background:#f0f0f0;"></div>
<div style="left:4px;top:524px;width:80px;height:25px;background:#7b7bff;box-shadow:inset 1px 0 0 rgba(150,150,170,0.35),inset -1px 0 0 rgba(150,150,170,0.2)"></div>
<div style="left:501px;top:524px;width:188px;height:25px;background:#fdf9f6;"></div>
<div style="left:690px;top:524px;width:202px;height:25px;background:#eff6fa;"></div>
<div style="left:3px;top:549px;width:1028px;height:26px;background:#fff;"></div>
<div style="left:4px;top:550px;width:80px;height:25px;background:#7b7bff;box-shadow:inset 1px 0 0 rgba(150,150,170,0.35),inset -1px 0 0 rgba(150,150,170,0.2)"></div>
<div style="left:501px;top:550px;width:188px;height:25px;background:#fdf9f6;"></div>
<div style="left:690px;top:550px;width:202px;height:25px;background:#eff6fa;"></div>
<div style="left:3px;top:575px;width:1028px;height:26px;background:#f0f0f0;"></div>
<div style="left:4px;top:576px;width:80px;height:25px;background:#7b7bff;box-shadow:inset 1px 0 0 rgba(150,150,170,0.35),inset -1px 0 0 rgba(150,150,170,0.2)"></div>
<div style="left:501px;top:576px;width:188px;height:25px;background:#fdf9f6;"></div>
<div style="left:690px;top:576px;width:202px;height:25px;background:#eff6fa;"></div>
<div style="left:3px;top:601px;width:1028px;height:26px;background:#fff;"></div>
<div style="left:4px;top:602px;width:80px;height:25px;background:#7b7bff;box-shadow:inset 1px 0 0 rgba(150,150,170,0.35),inset -1px 0 0 rgba(150,150,170,0.2)"></div>
<div style="left:501px;top:602px;width:188px;height:25px;background:#fdf9f6;"></div>
<div style="left:690px;top:602px;width:202px;height:25px;background:#eff6fa;"></div>
<div style="left:3px;top:627px;width:1028px;height:26px;background:#f0f0f0;"></div>
<div style="left:4px;top:628px;width:80px;height:25px;background:#8b8ac0;box-shadow:inset 1px 0 0 rgba(150,150,170,0.35),inset -1px 0 0 rgba(150,150,170,0.2)"></div>
<div style="left:501px;top:628px;width:188px;height:25px;background:#fdf9f6;"></div>
<div style="left:690px;top:628px;width:202px;height:25px;background:#eff6fa;"></div>
<div style="left:3px;top:653px;width:1028px;height:26px;background:#fff;"></div>
<div style="left:4px;top:654px;width:80px;height:25px;background:#7b7bff;box-shadow:inset 1px 0 0 rgba(150,150,170,0.35),inset -1px 0 0 rgba(150,150,170,0.2)"></div>
<div style="left:501px;top:654px;width:188px;height:25px;background:#fdf9f6;"></div>
<div style="left:690px;top:654px;width:202px;height:25px;background:#eff6fa;"></div>
<div style="left:3px;top:679px;width:1028px;height:26px;background:#f0f0f0;"></div>
<div style="left:4px;top:680px;width:80px;height:25px;background:#7b7bff;box-shadow:inset 1px 0 0 rgba(150,150,170,0.35),inset -1px 0 0 rgba(150,150,170,0.2)"></div>
<div style="left:501px;top:680px;width:188px;height:25px;background:#fdf9f6;"></div>
<div style="left:690px;top:680px;width:202px;height:25px;background:#eff6fa;"></div>
<div style="left:3px;top:705px;width:1028px;height:26px;background:#fff;"></div>
<div style="left:3px;top:406px;width:1028px;height:1px;background:#c0c0c0;"></div>
<div style="left:500px;top:426px;width:531px;height:1px;background:#c0c0c0;"></div>
<div style="left:3px;top:445px;width:1028px;height:1px;background:#c0c0c0;"></div>
<div style="left:3px;top:471px;width:1028px;height:1px;background:#c0c0c0;"></div>
<div style="left:4px;top:471px;width:80px;height:1px;background:#b3b3f6;"></div>
<div style="left:3px;top:497px;width:1028px;height:1px;background:#c0c0c0;"></div>
<div style="left:4px;top:497px;width:80px;height:1px;background:#b3b3f6;"></div>
<div style="left:3px;top:523px;width:1028px;height:1px;background:#c0c0c0;"></div>
<div style="left:4px;top:523px;width:80px;height:1px;background:#b3b3f6;"></div>
<div style="left:3px;top:549px;width:1028px;height:1px;background:#c0c0c0;"></div>
<div style="left:4px;top:549px;width:80px;height:1px;background:#b3b3f6;"></div>
<div style="left:3px;top:575px;width:1028px;height:1px;background:#c0c0c0;"></div>
<div style="left:4px;top:575px;width:80px;height:1px;background:#b3b3f6;"></div>
<div style="left:3px;top:601px;width:1028px;height:1px;background:#c0c0c0;"></div>
<div style="left:4px;top:601px;width:80px;height:1px;background:#b3b3f6;"></div>
<div style="left:3px;top:627px;width:1028px;height:1px;background:#c0c0c0;"></div>
<div style="left:4px;top:627px;width:80px;height:1px;background:#b3b3f6;"></div>
<div style="left:3px;top:653px;width:1028px;height:1px;background:#c0c0c0;"></div>
<div style="left:4px;top:653px;width:80px;height:1px;background:#b3b3f6;"></div>
<div style="left:3px;top:679px;width:1028px;height:1px;background:#c0c0c0;"></div>
<div style="left:4px;top:679px;width:80px;height:1px;background:#b3b3f6;"></div>
<div style="left:3px;top:705px;width:1028px;height:1px;background:#c0c0c0;"></div>
<div style="left:3px;top:731px;width:1028px;height:1px;background:#c0c0c0;"></div>
<div style="left:3px;top:406px;width:1px;height:326px;background:#c0c0c0;"></div>
<div style="left:84px;top:406px;width:1px;height:300px;background:#c0c0c0;"></div>
<div style="left:162px;top:406px;width:1px;height:300px;background:#c0c0c0;"></div>
<div style="left:272px;top:406px;width:1px;height:300px;background:#c0c0c0;"></div>
<div style="left:364px;top:406px;width:1px;height:300px;background:#c0c0c0;"></div>
<div style="left:404px;top:406px;width:1px;height:300px;background:#c0c0c0;"></div>
<div style="left:500px;top:406px;width:1px;height:300px;background:#c0c0c0;"></div>
<div style="left:550px;top:426px;width:1px;height:280px;background:#c0c0c0;"></div>
<div style="left:636px;top:426px;width:1px;height:280px;background:#c0c0c0;"></div>
<div style="left:689px;top:406px;width:1px;height:300px;background:#c0c0c0;"></div>
<div style="left:756px;top:426px;width:1px;height:280px;background:#c0c0c0;"></div>
<div style="left:823px;top:426px;width:1px;height:280px;background:#c0c0c0;"></div>
<div style="left:892px;top:406px;width:1px;height:300px;background:#c0c0c0;"></div>
<div style="left:931px;top:426px;width:1px;height:280px;background:#c0c0c0;"></div>
<div style="left:970px;top:426px;width:1px;height:280px;background:#c0c0c0;"></div>
<div style="left:1030px;top:406px;width:1px;height:326px;background:#c0c0c0;"></div>
<div class="t" style="left:4px;top:407px;width:80px;height:39px;line-height:39px;">类型</div>
<div class="t" style="left:85px;top:407px;width:77px;height:39px;line-height:39px;">日期</div>
<div class="t" style="left:163px;top:407px;width:109px;height:39px;line-height:39px;">主场</div>
<div class="t" style="left:273px;top:407px;width:91px;height:39px;line-height:39px;">比分(半场)</div>
<div class="t" style="left:365px;top:407px;width:39px;height:39px;line-height:39px;">角球</div>
<div class="t" style="left:405px;top:407px;width:95px;height:39px;line-height:39px;">客场</div>
<div class="t" style="left:501px;top:428px;width:49px;height:18px;line-height:18px;">主</div>
<div class="t" style="left:551px;top:428px;width:85px;height:18px;line-height:18px;">让球</div>
<div class="t" style="left:637px;top:428px;width:52px;height:18px;line-height:18px;">客</div>
<div class="t" style="left:690px;top:428px;width:66px;height:18px;line-height:18px;">主</div>
<div class="t" style="left:757px;top:428px;width:66px;height:18px;line-height:18px;">和</div>
<div class="t" style="left:824px;top:428px;width:68px;height:18px;line-height:18px;">客</div>
<div class="t" style="left:893px;top:428px;width:38px;height:18px;line-height:18px;">胜负</div>
<div class="t" style="left:932px;top:428px;width:38px;height:18px;line-height:18px;">让球</div>
<div class="t" style="left:971px;top:428px;width:59px;height:18px;line-height:18px;">进球数</div>
<div class="t" style="left:4px;top:447px;width:80px;height:25px;line-height:25px;color:#fff">丹麦甲</div>
<div class="t" style="left:85px;top:447px;width:77px;height:25px;line-height:25px;">25-11-01</div>
<div class="t" style="left:163px;top:447px;width:109px;height:25px;line-height:25px;"><span style="color:#0f7d0f">米德法特</span></div>
<div class="t" style="left:273px;top:447px;width:91px;height:25px;line-height:25px;"><span style="color:#d42020">1-2</span>(0-1)</div>
<div class="t" style="left:365px;top:447px;width:39px;height:25px;line-height:25px;">4-4</div>
<div class="t" style="left:405px;top:447px;width:95px;height:25px;line-height:25px;">奥尔堡<span class="bd">1</span></div>
<div class="t" style="left:501px;top:447px;width:49px;height:25px;line-height:25px;">0.97</div>
<div class="t" style="left:551px;top:447px;width:85px;height:25px;line-height:25px;">受半/一</div>
<div class="t" style="left:637px;top:447px;width:52px;height:25px;line-height:25px;">0.91</div>
<div class="t" style="left:690px;top:447px;width:66px;height:25px;line-height:25px;">4.07</div>
<div class="t" style="left:757px;top:447px;width:66px;height:25px;line-height:25px;">3.66</div>
<div class="t" style="left:824px;top:447px;width:68px;height:25px;line-height:25px;">1.76</div>
<div class="t" style="left:893px;top:447px;width:38px;height:25px;line-height:25px;"><span style="color:#1818bb">负</span></div>
<div class="t" style="left:932px;top:447px;width:38px;height:25px;line-height:25px;"><span style="color:#1818bb">输</span></div>
<div class="t" style="left:971px;top:447px;width:59px;height:25px;line-height:25px;"><span style="color:#d42020">大</span></div>
<div class="t" style="left:4px;top:473px;width:80px;height:25px;line-height:25px;color:#fff">丹麦甲</div>
<div class="t" style="left:85px;top:473px;width:77px;height:25px;line-height:25px;">25-10-25</div>
<div class="t" style="left:163px;top:473px;width:109px;height:25px;line-height:25px;">科灵</div>
<div class="t" style="left:273px;top:473px;width:91px;height:25px;line-height:25px;"><span style="color:#d42020">1-0</span>(0-0)</div>
<div class="t" style="left:365px;top:473px;width:39px;height:25px;line-height:25px;">13-5</div>
<div class="t" style="left:405px;top:473px;width:95px;height:25px;line-height:25px;"><span style="color:#0f7d0f">米德法特</span></div>
<div class="t" style="left:501px;top:473px;width:49px;height:25px;line-height:25px;">0.80</div>
<div class="t" style="left:551px;top:473px;width:85px;height:25px;line-height:25px;">半/一</div>
<div class="t" style="left:637px;top:473px;width:52px;height:25px;line-height:25px;">1.08</div>
<div class="t" style="left:690px;top:473px;width:66px;height:25px;line-height:25px;">1.58</div>
<div class="t" style="left:757px;top:473px;width:66px;height:25px;line-height:25px;">3.89</div>
<div class="t" style="left:824px;top:473px;width:68px;height:25px;line-height:25px;">5.10</div>
<div class="t" style="left:893px;top:473px;width:38px;height:25px;line-height:25px;"><span style="color:#1818bb">负</span></div>
<div class="t" style="left:932px;top:473px;width:38px;height:25px;line-height:25px;"><span style="color:#1818bb">输</span></div>
<div class="t" style="left:971px;top:473px;width:59px;height:25px;line-height:25px;"><span style="color:#1818bb">小</span></div>
<div class="t" style="left:4px;top:499px;width:80px;height:25px;line-height:25px;color:#fff">丹麦甲</div>
<div class="t" style="left:85px;top:499px;width:77px;height:25px;line-height:25px;">25-10-18</div>
<div class="t" style="left:163px;top:499px;width:109px;height:25px;line-height:25px;"><span class="bd">2</span><span style="color:#0f7d0f">米德法特</span></div>
<div class="t" style="left:273px;top:499px;width:91px;height:25px;line-height:25px;"><span style="color:#d42020">0-3</span>(0-1)</div>
<div class="t" style="left:365px;top:499px;width:39px;height:25px;line-height:25px;">5-5</div>
<div class="t" style="left:405px;top:499px;width:95px;height:25px;line-height:25px;">霍森斯</div>
<div class="t" style="left:501px;top:499px;width:49px;height:25px;line-height:25px;">0.85</div>
<div class="t" style="left:551px;top:499px;width:85px;height:25px;line-height:25px;">受半/一</div>
<div class="t" style="left:637px;top:499px;width:52px;height:25px;line-height:25px;">1.03</div>
<div class="t" style="left:690px;top:499px;width:66px;height:25px;line-height:25px;">4.26</div>
<div class="t" style="left:757px;top:499px;width:66px;height:25px;line-height:25px;">3.43</div>
<div class="t" style="left:824px;top:499px;width:68px;height:25px;line-height:25px;">1.78</div>
<div class="t" style="left:893px;top:499px;width:38px;height:25px;line-height:25px;"><span style="color:#1818bb">负</span></div>
<div class="t" style="left:932px;top:499px;width:38px;height:25px;line-height:25px;"><span style="color:#1818bb">输</span></div>
<div class="t" style="left:971px;top:499px;width:59px;height:25px;line-height:25px;"><span style="color:#d42020">大</span></div>
<div class="t" style="left:4px;top:525px;width:80px;height:25px;line-height:25px;color:#fff">丹麦甲</div>
<div class="t" style="left:85px;top:525px;width:77px;height:25px;line-height:25px;">25-10-04</div>
<div class="t" style="left:163px;top:525px;width:109px;height:25px;line-height:25px;"><span style="color:#0f7d0f">米德法特</span></div>
<div class="t" style="left:273px;top:525px;width:91px;height:25px;line-height:25px;"><span style="color:#d42020">1-2</span>(1-1)</div>
<div class="t" style="left:365px;top:525px;width:39px;height:25px;line-height:25px;">2-5</div>
<div class="t" style="left:405px;top:525px;width:95px;height:25px;line-height:25px;">希勒罗德</div>
<div class="t" style="left:501px;top:525px;width:49px;height:25px;line-height:25px;">1.00</div>
<div class="t" style="left:551px;top:525px;width:85px;height:25px;line-height:25px;">平手</div>
<div class="t" style="left:637px;top:525px;width:52px;height:25px;line-height:25px;">0.88</div>
<div class="t" style="left:690px;top:525px;width:66px;height:25px;line-height:25px;">3.29</div>
<div class="t" style="left:757px;top:525px;width:66px;height:25px;line-height:25px;">3.58</div>
<div class="t" style="left:824px;top:525px;width:68px;height:25px;line-height:25px;">2.00</div>
<div class="t" style="left:893px;top:525px;width:38px;height:25px;line-height:25px;"><span style="color:#1818bb">负</span></div>
<div class="t" style="left:932px;top:525px;width:38px;height:25px;line-height:25px;"><span style="color:#1818bb">输</span></div>
<div class="t" style="left:971px;top:525px;width:59px;height:25px;line-height:25px;"><span style="color:#d42020">大</span></div>
<div class="t" style="left:4px;top:551px;width:80px;height:25px;line-height:25px;color:#fff">丹麦甲</div>
<div class="t" style="left:85px;top:551px;width:77px;height:25px;line-height:25px;">25-09-27</div>
<div class="t" style="left:163px;top:551px;width:109px;height:25px;line-height:25px;">B93哥本哈根</div>
<div class="t" style="left:273px;top:551px;width:91px;height:25px;line-height:25px;"><span style="color:#d42020">1-0</span>(1-0)</div>
<div class="t" style="left:365px;top:551px;width:39px;height:25px;line-height:25px;">7-8</div>
<div class="t" style="left:405px;top:551px;width:95px;height:25px;line-height:25px;"><span style="color:#0f7d0f">米德法特</span></div>
<div class="t" style="left:501px;top:551px;width:49px;height:25px;line-height:25px;">0.91</div>
<div class="t" style="left:551px;top:551px;width:85px;height:25px;line-height:25px;">平/半</div>
<div class="t" style="left:637px;top:551px;width:52px;height:25px;line-height:25px;">0.97</div>
<div class="t" style="left:690px;top:551px;width:66px;height:25px;line-height:25px;">2.11</div>
<div class="t" style="left:757px;top:551px;width:66px;height:25px;line-height:25px;">3.55</div>
<div class="t" style="left:824px;top:551px;width:68px;height:25px;line-height:25px;">3.03</div>
<div class="t" style="left:893px;top:551px;width:38px;height:25px;line-height:25px;"><span style="color:#1818bb">负</span></div>
<div class="t" style="left:932px;top:551px;width:38px;height:25px;line-height:25px;"><span style="color:#1818bb">输</span></div>
<div class="t" style="left:971px;top:551px;width:59px;height:25px;line-height:25px;"><span style="color:#1818bb">小</span></div>
<div class="t" style="left:4px;top:577px;width:80px;height:25px;line-height:25px;color:#fff">丹麦甲</div>
<div class="t" style="left:85px;top:577px;width:77px;height:25px;line-height:25px;">25-09-20</div>
<div class="t" style="left:163px;top:577px;width:109px;height:25px;line-height:25px;"><span style="color:#0f7d0f">米德法特</span></div>
<div class="t" style="left:273px;top:577px;width:91px;height:25px;line-height:25px;"><span style="color:#d42020">1-0</span>(0-0)</div>
<div class="t" style="left:365px;top:577px;width:39px;height:25px;line-height:25px;">8-10</div>
<div class="t" style="left:405px;top:577px;width:95px;height:25px;line-height:25px;">科灵</div>
<div class="t" style="left:501px;top:577px;width:49px;height:25px;line-height:25px;">1.00</div>
<div class="t" style="left:551px;top:577px;width:85px;height:25px;line-height:25px;">受半/一</div>
<div class="t" style="left:637px;top:577px;width:52px;height:25px;line-height:25px;">0.88</div>
<div class="t" style="left:690px;top:577px;width:66px;height:25px;line-height:25px;">4.68</div>
<div class="t" style="left:757px;top:577px;width:66px;height:25px;line-height:25px;">3.64</div>
<div class="t" style="left:824px;top:577px;width:68px;height:25px;line-height:25px;">1.67</div>
<div class="t" style="left:893px;top:577px;width:38px;height:25px;line-height:25px;"><span style="color:#d42020">胜</span></div>
<div class="t" style="left:932px;top:577px;width:38px;height:25px;line-height:25px;"><span style="color:#d42020">赢</span></div>
<div class="t" style="left:971px;top:577px;width:59px;height:25px;line-height:25px;"><span style="color:#1818bb">小</span></div>
<div class="t" style="left:4px;top:603px;width:80px;height:25px;line-height:25px;color:#fff">丹麦甲</div>
<div class="t" style="left:85px;top:603px;width:77px;height:25px;line-height:25px;">25-09-14</div>
<div class="t" style="left:163px;top:603px;width:109px;height:25px;line-height:25px;">奥尔堡</div>
<div class="t" style="left:273px;top:603px;width:91px;height:25px;line-height:25px;"><span style="color:#d42020">4-0</span>(0-0)</div>
<div class="t" style="left:365px;top:603px;width:39px;height:25px;line-height:25px;">3-4</div>
<div class="t" style="left:405px;top:603px;width:95px;height:25px;line-height:25px;"><span style="color:#0f7d0f">米德法特</span></div>
<div class="t" style="left:501px;top:603px;width:49px;height:25px;line-height:25px;">0.80</div>
<div class="t" style="left:551px;top:603px;width:85px;height:25px;line-height:25px;">一球</div>
<div class="t" style="left:637px;top:603px;width:52px;height:25px;line-height:25px;">1.09</div>
<div class="t" style="left:690px;top:603px;width:66px;height:25px;line-height:25px;">1.48</div>
<div class="t" style="left:757px;top:603px;width:66px;height:25px;line-height:25px;">4.25</div>
<div class="t" style="left:824px;top:603px;width:68px;height:25px;line-height:25px;">5.70</div>
<div class="t" style="left:893px;top:603px;width:38px;height:25px;line-height:25px;"><span style="color:#1818bb">负</span></div>
<div class="t" style="left:932px;top:603px;width:38px;height:25px;line-height:25px;"><span style="color:#1818bb">输</span></div>
<div class="t" style="left:971px;top:603px;width:59px;height:25px;line-height:25px;"><span style="color:#d42020">大</span></div>
<div class="t" style="left:4px;top:629px;width:80px;height:25px;line-height:25px;color:#fff">丹麦杯</div>
<div class="t" style="left:85px;top:629px;width:77px;height:25px;line-height:25px;">25-09-03</div>
<div class="t" style="left:163px;top:629px;width:109px;height:25px;line-height:25px;"><span style="color:#0f7d0f">米德法特</span></div>
<div class="t" style="left:273px;top:629px;width:91px;height:25px;line-height:25px;"><span style="color:#d42020">1-2</span>(1-0)</div>
<div class="t" style="left:365px;top:629px;width:39px;height:25px;line-height:25px;">0-0</div>
<div class="t" style="left:405px;top:629px;width:95px;height:25px;line-height:25px;">锡尔克堡</div>
<div class="t" style="left:690px;top:629px;width:66px;height:25px;line-height:25px;">5.25</div>
<div class="t" style="left:757px;top:629px;width:66px;height:25px;line-height:25px;">4.16</div>
<div class="t" style="left:824px;top:629px;width:68px;height:25px;line-height:25px;">1.51</div>
<div class="t" style="left:893px;top:629px;width:38px;height:25px;line-height:25px;"><span style="color:#1818bb">负</span></div>
<div class="t" style="left:4px;top:655px;width:80px;height:25px;line-height:25px;color:#fff">丹麦甲</div>
<div class="t" style="left:85px;top:655px;width:77px;height:25px;line-height:25px;">25-08-30</div>
<div class="t" style="left:163px;top:655px;width:109px;height:25px;line-height:25px;"><span style="color:#0f7d0f">米德法特</span></div>
<div class="t" style="left:273px;top:655px;width:91px;height:25px;line-height:25px;"><span style="color:#d42020">2-2</span>(0-2)</div>
<div class="t" style="left:365px;top:655px;width:39px;height:25px;line-height:25px;">3-7</div>
<div class="t" style="left:405px;top:655px;width:95px;height:25px;line-height:25px;">利恩比</div>
<div class="t" style="left:501px;top:655px;width:49px;height:25px;line-height:25px;">1.05</div>
<div class="t" style="left:551px;top:655px;width:85px;height:25px;line-height:25px;">受半/一</div>
<div class="t" style="left:637px;top:655px;width:52px;height:25px;line-height:25px;">0.84</div>
<div class="t" style="left:690px;top:655px;width:66px;height:25px;line-height:25px;">5.24</div>
<div class="t" style="left:757px;top:655px;width:66px;height:25px;line-height:25px;">3.78</div>
<div class="t" style="left:824px;top:655px;width:68px;height:25px;line-height:25px;">1.58</div>
<div class="t" style="left:893px;top:655px;width:38px;height:25px;line-height:25px;"><span style="color:#0f7d0f">平</span></div>
<div class="t" style="left:932px;top:655px;width:38px;height:25px;line-height:25px;"><span style="color:#d42020">赢</span></div>
<div class="t" style="left:971px;top:655px;width:59px;height:25px;line-height:25px;"><span style="color:#d42020">大</span></div>
<div class="t" style="left:4px;top:681px;width:80px;height:25px;line-height:25px;color:#fff">丹麦甲</div>
<div class="t" style="left:85px;top:681px;width:77px;height:25px;line-height:25px;">25-08-23</div>
<div class="t" style="left:163px;top:681px;width:109px;height:25px;line-height:25px;"><span style="color:#0f7d0f">米德法特</span></div>
<div class="t" style="left:273px;top:681px;width:91px;height:25px;line-height:25px;"><span style="color:#d42020">2-2</span>(1-1)</div>
<div class="t" style="left:365px;top:681px;width:39px;height:25px;line-height:25px;">7-4</div>
<div class="t" style="left:405px;top:681px;width:95px;height:25px;line-height:25px;">奥胡斯费马</div>
<div class="t" style="left:501px;top:681px;width:49px;height:25px;line-height:25px;">0.86</div>
<div class="t" style="left:551px;top:681px;width:85px;height:25px;line-height:25px;">受半/一</div>
<div class="t" style="left:637px;top:681px;width:52px;height:25px;line-height:25px;">1.03</div>
<div class="t" style="left:690px;top:681px;width:66px;height:25px;line-height:25px;">4.20</div>
<div class="t" style="left:757px;top:681px;width:66px;height:25px;line-height:25px;">3.66</div>
<div class="t" style="left:824px;top:681px;width:68px;height:25px;line-height:25px;">1.74</div>
<div class="t" style="left:893px;top:681px;width:38px;height:25px;line-height:25px;"><span style="color:#0f7d0f">平</span></div>
<div class="t" style="left:932px;top:681px;width:38px;height:25px;line-height:25px;"><span style="color:#d42020">赢</span></div>
<div class="t" style="left:971px;top:681px;width:59px;height:25px;line-height:25px;"><span style="color:#d42020">大</span></div>
<div class="t" style="left:4px;top:707px;width:1026px;height:25px;line-height:25px;letter-spacing:0.17px">近<span style="color:#d42020">10</span>场,胜1平2负7, 胜率:<span style="color:#d42020">10%</span> 让胜率:<span style="color:#d42020">33.3%</span> 大率:<span style="color:#d42020">66.7%</span> 单率:<span style="color:#d42020">70%</span></div>
<div class="sel" style="left:535px;top:407px;width:58px;height:17px"><span style="position:absolute;left:4px;top:0px;line-height:17px;font-size:13.33px;">Crow*</span><svg style="position:absolute;right:3px;top:5px" width="10" height="7" viewBox="0 0 10 7"><path d="M0.9 1.3 L5 5.3 L9.1 1.3" stroke="#000" stroke-width="2" fill="none"/></svg></div><div class="sel" style="left:603px;top:407px;width:49px;height:17px"><span style="position:absolute;left:4px;top:0px;line-height:17px;font-size:13.33px;">终指</span><svg style="position:absolute;right:3px;top:5px" width="10" height="7" viewBox="0 0 10 7"><path d="M0.9 1.3 L5 5.3 L9.1 1.3" stroke="#000" stroke-width="2" fill="none"/></svg></div><div class="sel" style="left:726px;top:407px;width:67px;height:17px"><span style="position:absolute;left:4px;top:0px;line-height:17px;font-size:13.33px;">平均值</span><svg style="position:absolute;right:3px;top:5px" width="10" height="7" viewBox="0 0 10 7"><path d="M0.9 1.3 L5 5.3 L9.1 1.3" stroke="#000" stroke-width="2" fill="none"/></svg></div><div class="sel" style="left:804px;top:407px;width:49px;height:17px"><span style="position:absolute;left:4px;top:0px;line-height:17px;font-size:13.33px;">终指</span><svg style="position:absolute;right:3px;top:5px" width="10" height="7" viewBox="0 0 10 7"><path d="M0.9 1.3 L5 5.3 L9.1 1.3" stroke="#000" stroke-width="2" fill="none"/></svg></div><div class="sel" style="left:936px;top:407px;width:49px;height:17px"><span style="position:absolute;left:4px;top:0px;line-height:17px;font-size:13.33px;">全场</span><svg style="position:absolute;right:3px;top:5px" width="10" height="7" viewBox="0 0 10 7"><path d="M0.9 1.3 L5 5.3 L9.1 1.3" stroke="#000" stroke-width="2" fill="none"/></svg></div>
</body></html>
